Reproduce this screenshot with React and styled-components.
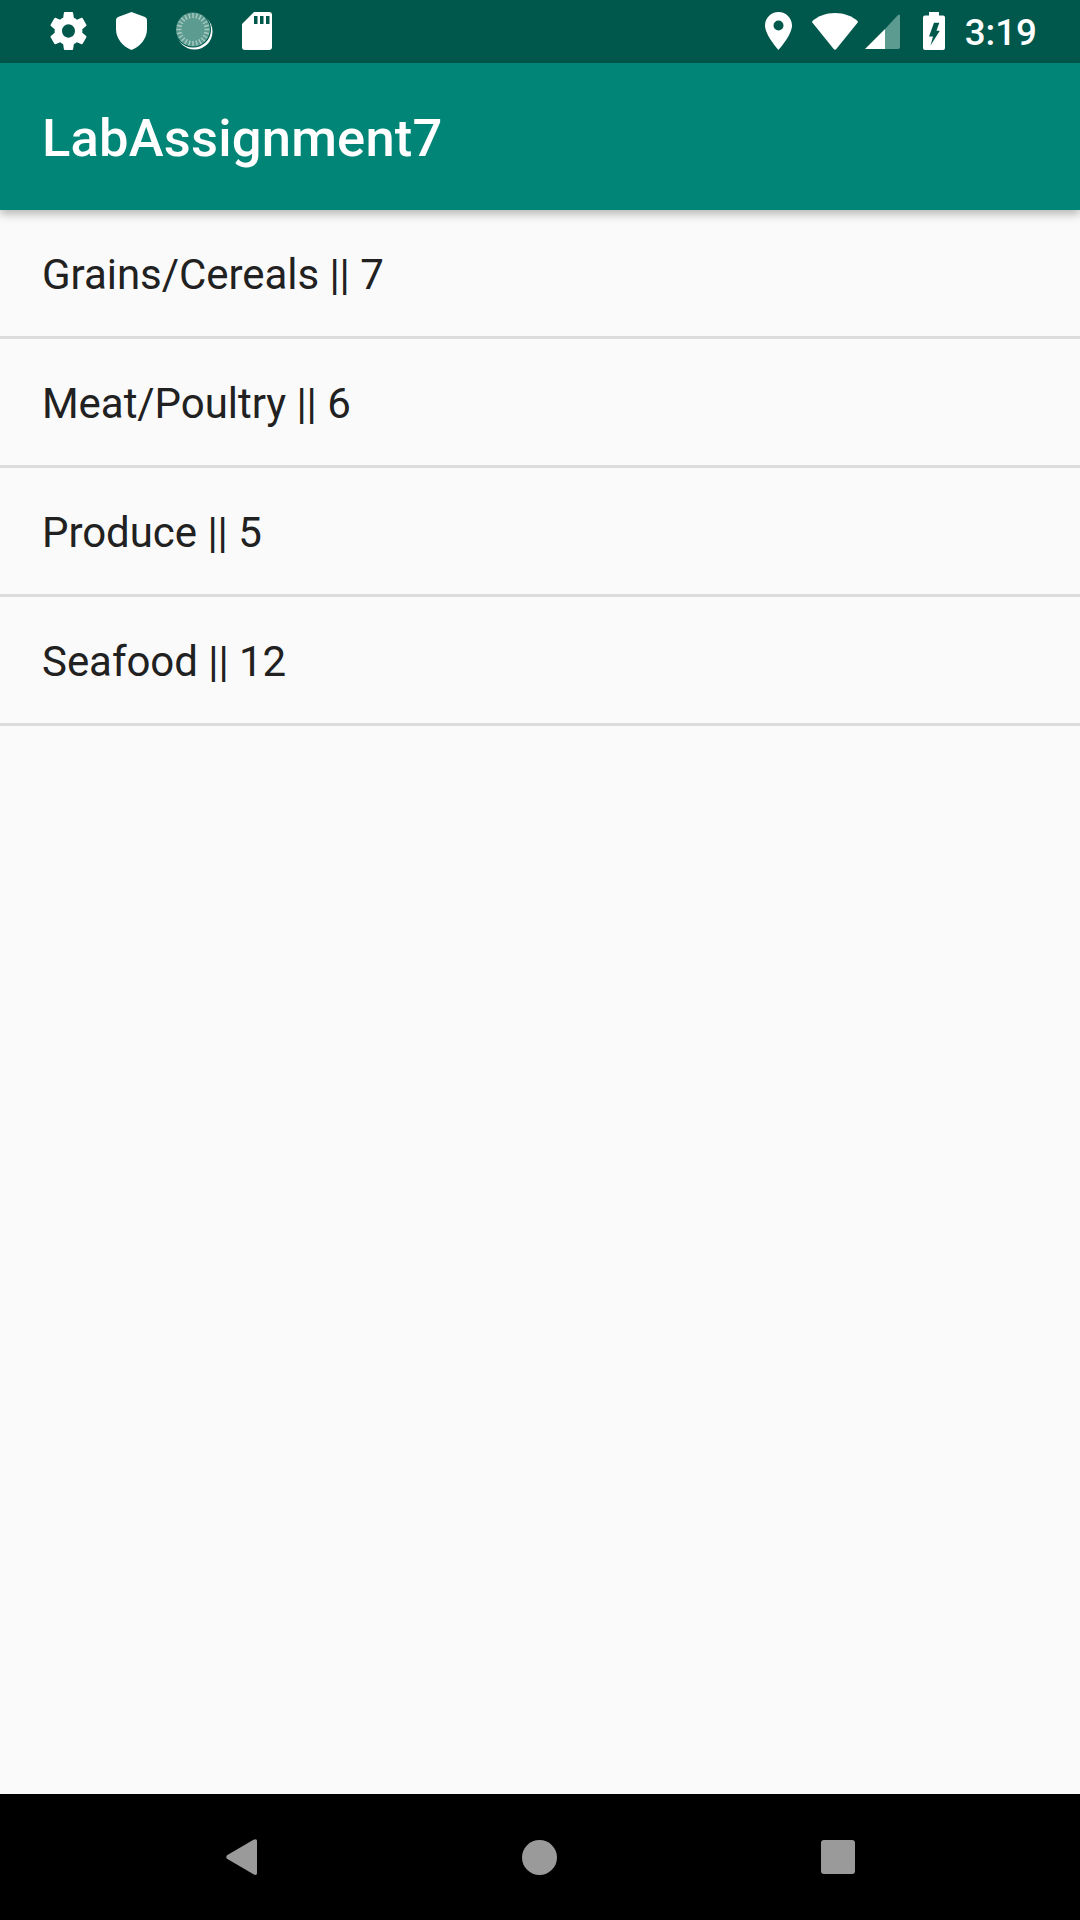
import React from "react";
import styled, { createGlobalStyle } from "styled-components";

const categories = [
  { name: "Grains/Cereals", count: 7 },
  { name: "Meat/Poultry", count: 6 },
  { name: "Produce", count: 5 },
  { name: "Seafood", count: 12 },
];

const App = () => {
  return (
    <Screen>
      <GlobalStyle />
      <StatusBar>
        <StatusGroup>
          <svg width="37" height="38" viewBox="2 2 20 20" preserveAspectRatio="none" fill="#fff">
            <path d="M19.43 12.98c.04-.32.07-.64.07-.98s-.03-.66-.07-.98l2.11-1.65c.19-.15.24-.42.12-.64l-2-3.46c-.12-.22-.39-.3-.61-.22l-2.49 1c-.52-.4-1.08-.73-1.69-.98l-.38-2.65C14.46 2.18 14.25 2 14 2h-4c-.25 0-.46.18-.49.42l-.38 2.65c-.61.25-1.17.59-1.69.98l-2.49-1c-.23-.09-.49 0-.61.22l-2 3.46c-.13.22-.07.49.12.64l2.11 1.65c-.04.32-.07.65-.07.98s.03.66.07.98l-2.11 1.65c-.19.15-.24.42-.12.64l2 3.46c.12.22.39.3.61.22l2.49-1c.52.4 1.08.73 1.69.98l.38 2.65c.03.24.24.42.49.42h4c.25 0 .46-.18.49-.42l.38-2.65c.61-.25 1.17-.59 1.69-.98l2.49 1c.23.09.49 0 .61-.22l2-3.46c.12-.22.07-.49-.12-.64l-2.11-1.65zM12 15.5c-1.93 0-3.5-1.57-3.5-3.5s1.57-3.5 3.5-3.5 3.5 1.57 3.5 3.5-1.57 3.5-3.5 3.5z" />
          </svg>
          <svg width="31" height="38" viewBox="0 0 31 38" fill="#fff">
            <path d="M15.5 0 L29 5 Q31 5.8 31 8 V17 C31 27 24 34.500 15.500 38 C7 34.500 0 27 0 17 V8 Q0 5.800 2 5 Z" />
          </svg>
          <svg width="37" height="38" viewBox="0 0 37 38">
            <circle cx="18.500" cy="19.500" r="18" fill="#fff" />
            <circle cx="17" cy="17.500" r="18" fill="#00574b" />
            <circle cx="17" cy="17.500" r="17" fill="#5c9b8f" />
            <g stroke="#a9cbc4" strokeWidth="1.400">
              {Array.from({ length: 24 }).map((_, i) => (
                <line
                  key={i}
                  x1="17"
                  y1="1"
                  x2="17"
                  y2="6"
                  transform={`rotate(${i * 15} 17 17.500)`}
                />
              ))}
            </g>
          </svg>
          <svg width="30" height="38" viewBox="0 0 30 38">
            <path
              fill="#fff"
              d="M12 0 H27 Q30 0 30 3 V35 Q30 38 27 38 H3 Q0 38 0 35 V12 Z"
            />
            <path fill="#00574b" d="M12 4 h3.500 v8 h-3.500 z M18 4 h3.500 v8 h-3.500 z M24 4 h3.500 v8 h-3.500 z" />
          </svg>
        </StatusGroup>
        <StatusGroup $gap={0}>
          <svg width="27" height="38" viewBox="0 0 27 38" fill="#fff">
            <path
              fillRule="evenodd"
              d="M13.500 0 C6 0 0 6 0 13.500 C0 23 13.500 38 13.500 38 C13.500 38 27 23 27 13.500 C27 6 21 0 13.500 0 Z M13.500 8.500 A5 5 0 1 1 13.500 18.500 A5 5 0 1 1 13.500 8.500 Z"
            />
          </svg>
          <StatusSlot $left={20}>
            <svg width="46" height="37" viewBox="0 0 46 37" fill="#fff">
              <path d="M23 0 C32 0 40 3 45.500 8 Q46.300 8.800 45.500 9.800 L24.500 35.800 Q23 37.500 21.500 35.800 L0.500 9.800 Q-0.300 8.800 0.500 8 C6 3 14 0 23 0 Z" />
            </svg>
          </StatusSlot>
          <StatusSlot $left={7}>
            <svg width="35" height="35" viewBox="0 0 35 35">
              <path fill="#fff" d="M0 35 L20 15 V35 Z" />
              <path fill="#5c9b8f" d="M20 15 L33 1 Q35 -0.500 35 2 V33 Q35 35 33 35 H20 Z" />
            </svg>
          </StatusSlot>
          <StatusSlot $left={23}>
            <svg width="22" height="38" viewBox="0 0 22 38">
              <path
                fill="#fff"
                d="M6 0 H16 V3.500 H20 Q22 3.500 22 5.500 V36 Q22 38 20 38 H2 Q0 38 0 36 V5.500 Q0 3.500 2 3.500 H6 Z"
              />
              <path fill="#00574b" d="M11 10.700 H16.300 L13.500 18.700 H16.800 L7.500 33.500 L10 24.500 H6 Z" />
            </svg>
          </StatusSlot>
          <Clock>3:19</Clock>
        </StatusGroup>
      </StatusBar>
      <AppBar>
        <AppTitle>LabAssignment7</AppTitle>
      </AppBar>
      <List>
        {categories.map((item) => (
          <Row key={item.name}>
            {item.name} || {item.count}
          </Row>
        ))}
      </List>
      <NavBar>
        <svg width="32" height="36" viewBox="0 0 32 36" fill="#9a9a9a">
          <path d="M27.500 0.800 Q31 -1 31 2 V34 Q31 37 27.500 35.200 L1 19.800 Q-0.500 18 1 16.200 Z" />
        </svg>
        <svg width="35" height="35" viewBox="0 0 35 35" fill="#9a9a9a">
          <circle cx="17.500" cy="17.500" r="17.500" />
        </svg>
        <svg width="34" height="34" viewBox="0 0 34 34" fill="#9a9a9a">
          <rect width="34" height="34" rx="3" />
        </svg>
      </NavBar>
    </Screen>
  );
};

const GlobalStyle = createGlobalStyle`
  html, body {
    margin: 0;
    padding: 0;
    background: #fafafa;
  }
`;

const Screen = styled.div`
  display: flex;
  flex-direction: column;
  width: 1080px;
  height: 1920px;
  overflow: hidden;
  background: #fafafa;
  font-family: Roboto, "Liberation Sans", sans-serif;
`;

const StatusBar = styled.div`
  display: flex;
  justify-content: space-between;
  align-items: center;
  flex-shrink: 0;
  height: 63px;
  padding: 0 43px 1px 50px;
  box-sizing: border-box;
  background: #00574b;
`;

const StatusGroup = styled.div`
  display: flex;
  align-items: center;
  gap: ${(props) => props.$gap ?? 29}px;
`;

const StatusSlot = styled.div`
  display: flex;
  margin-left: ${(props) => props.$left}px;
`;

const Clock = styled.div`
  margin: 4px 0 0 20px;
  font-size: 36.750px;
  font-weight: 500;
  line-height: 58px;
  color: #fff;
`;

const AppBar = styled.div`
  position: relative;
  display: flex;
  align-items: center;
  flex-shrink: 0;
  height: 147px;
  padding-left: 42px;
  background: #008577;
  box-shadow: 0 4px 9px rgba(0, 0, 0, 0.28);
`;

const AppTitle = styled.div`
  padding-top: 3px;
  font-size: 52.500px;
  font-weight: 500;
  letter-spacing: 0.2px;
  color: #fff;
`;

const List = styled.div`
  flex: 1;
  display: flex;
  flex-direction: column;
`;

const Row = styled.div`
  display: flex;
  align-items: center;
  height: 129px;
  box-sizing: border-box;
  padding: 2px 0 0 42px;
  border-bottom: 3px solid #dcdcdc;
  font-size: 42px;
  letter-spacing: -0.05px;
  color: #212121;
`;

const NavBar = styled.div`
  display: flex;
  justify-content: space-between;
  align-items: center;
  flex-shrink: 0;
  height: 126px;
  padding: 0 225px 0 226px;
  box-sizing: border-box;
  background: #000;
`;

export default App;
